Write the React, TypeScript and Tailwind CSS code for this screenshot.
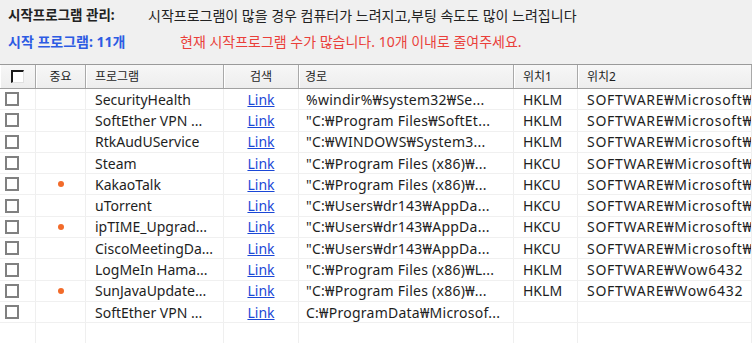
import React from "react";

type Row = { name: string; dot?: boolean; path: string; loc1: string; loc2: string };

const rows: Row[] = [
  { name: "SecurityHealth", path: "%windir%₩system32₩Se...", loc1: "HKLM", loc2: "SOFTWARE₩Microsoft₩" },
  { name: "SoftEther VPN ...", path: "\"C:₩Program Files₩SoftEt...", loc1: "HKLM", loc2: "SOFTWARE₩Microsoft₩" },
  { name: "RtkAudUService", path: "\"C:₩WINDOWS₩System3...", loc1: "HKLM", loc2: "SOFTWARE₩Microsoft₩" },
  { name: "Steam", path: "\"C:₩Program Files (x86)₩...", loc1: "HKCU", loc2: "SOFTWARE₩Microsoft₩" },
  { name: "KakaoTalk", dot: true, path: "\"C:₩Program Files (x86)₩...", loc1: "HKCU", loc2: "SOFTWARE₩Microsoft₩" },
  { name: "uTorrent", path: "\"C:₩Users₩dr143₩AppDa...", loc1: "HKCU", loc2: "SOFTWARE₩Microsoft₩" },
  { name: "ipTIME_Upgrad...", dot: true, path: "\"C:₩Users₩dr143₩AppDa...", loc1: "HKCU", loc2: "SOFTWARE₩Microsoft₩" },
  { name: "CiscoMeetingDa...", path: "\"C:₩Users₩dr143₩AppDa...", loc1: "HKCU", loc2: "SOFTWARE₩Microsoft₩" },
  { name: "LogMeIn Hama...", path: "\"C:₩Program Files (x86)₩L...", loc1: "HKLM", loc2: "SOFTWARE₩Wow6432" },
  { name: "SunJavaUpdate...", dot: true, path: "\"C:₩Program Files (x86)₩...", loc1: "HKLM", loc2: "SOFTWARE₩Wow6432" },
  { name: "SoftEther VPN ...", path: "C:₩ProgramData₩Microsof...", loc1: "", loc2: "" },
];

const cols = "grid grid-cols-[36px_50px_138px_75px_215px_64px_174px]";

function Cell({ children, className = "" }: { children?: React.ReactNode; className?: string }) {
  return (
    <div className={"border-r border-[#efefef] whitespace-nowrap overflow-hidden flex items-center " + className}>
      {children}
    </div>
  );
}

function HCell({ children, className = "" }: { children?: React.ReactNode; className?: string }) {
  return (
    <div className={"border-r border-[#a9a9a9] shadow-[inset_1px_0_0_#ffffff] whitespace-nowrap overflow-hidden flex items-center " + className}>
      {children}
    </div>
  );
}

export default function App() {
  return (
    <div
      className="w-[752px] h-[343px] bg-[#f0f0f0] overflow-hidden text-[#1e1e1e]"
      style={{ fontFamily: '"Noto Sans", "Noto Sans CJK KR", sans-serif' }}
    >
      <div className="h-[64px] pl-[8px] pt-[6px]">
        <div className="flex items-center h-[20px] leading-none">
          <span className="w-[140px] font-bold text-[13.5px] text-[#222]">시작프로그램 관리:</span>
          <span className="text-[14px] text-[#222]">시작프로그램이 많을 경우 컴퓨터가 느려지고,부팅 속도도 많이 느려집니다</span>
        </div>
        <div className="flex items-center h-[20px] mt-[6px] leading-none">
          <span className="w-[172px] font-bold text-[14px] text-[#2d5be3]">시작 프로그램: 11개</span>
          <span className="text-[14px] text-[#ea3f3a]">현재 시작프로그램 수가 많습니다. 10개 이내로 줄여주세요.</span>
        </div>
      </div>

      <div className="h-[279px] bg-white border-t border-[#9a9a9a] overflow-hidden">
        <div className={cols + " h-[24px] bg-gradient-to-b from-[#f7f7f7] to-[#ededed] border-b border-[#a0a0a0] text-[12px]"}>
          <HCell className="justify-center">
            <div className="w-[13px] h-[13px] bg-white border-l-2 border-t-2 border-[#1a1a1a] border-r border-b border-r-[#e0e0e0] border-b-[#e0e0e0]" />
          </HCell>
          <HCell className="justify-center">중요</HCell>
          <HCell className="pl-[9px]">프로그램</HCell>
          <HCell className="justify-center">검색</HCell>
          <HCell className="pl-[6px]">경로</HCell>
          <HCell className="pl-[9px]">위치1</HCell>
          <HCell className="pl-[9px]">위치2</HCell>
        </div>
        {rows.map((r, i) => (
          <div key={i} className={cols + " h-[21.3px] border-b border-[#f0f0f0] text-[14px]"}>
            <Cell className="pl-[5px]">
              <div className="w-[14px] h-[14px] border-2 border-[#808080] bg-white" />
            </Cell>
            <Cell className="justify-center">
              {r.dot && <div className="w-[6px] h-[6px] rounded-full bg-[#f26b2a]" />}
            </Cell>
            <Cell className="pl-[9px]">{r.name}</Cell>
            <Cell className="justify-center">
              <span className="text-[#1a47d6] underline">Link</span>
            </Cell>
            <Cell className="pl-[7px] tracking-[0.25px]">{r.path}</Cell>
            <Cell className="pl-[9px]">{r.loc1}</Cell>
            <Cell className="pl-[9px] tracking-[0.7px]">{r.loc2}</Cell>
          </div>
        ))}
        <div className={cols + " h-[40px]"}>
          <Cell />
          <Cell />
          <Cell />
          <Cell />
          <Cell />
          <Cell />
          <Cell />
        </div>
      </div>
    </div>
  );
}
